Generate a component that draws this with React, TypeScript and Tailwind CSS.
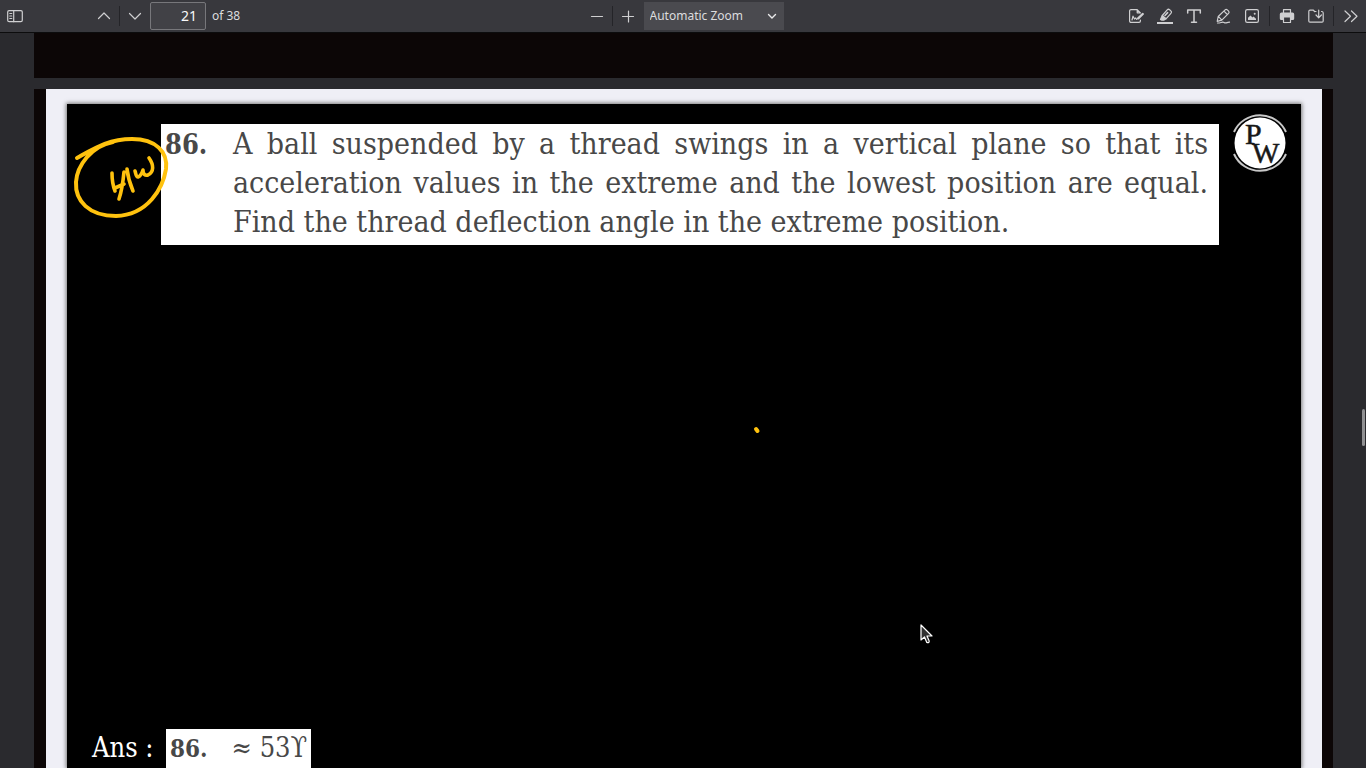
import type { ReactNode } from "react";

function ToolButton({ label, children }: { label: string; children: ReactNode }) {
  return (
    <button type="button" aria-label={label} className="flex h-7 w-7 shrink-0 items-center justify-center text-[#cfcfd1]">
      <svg width="16" height="16" viewBox="0 0 16 16" fill="none" stroke="currentColor" strokeWidth="1.2" strokeLinecap="round" strokeLinejoin="round" aria-hidden="true">
        {children}
      </svg>
    </button>
  );
}

function Separator() {
  return <span className="h-5 w-px shrink-0 bg-[#242428]" />;
}

function GroupSeparator() {
  return <span className="mx-0.5 h-5 w-px shrink-0 bg-[#242428]" />;
}

function Toolbar() {
  return (
    <header className="grid h-[33px] shrink-0 grid-cols-[1fr_auto_1fr] items-center border-b border-[#0c0c0d] bg-[#38383d] font-['Noto_Sans',sans-serif] text-xs text-[#dcdcde]">
      <div className="flex items-center pl-px">
        <ToolButton label="Toggle sidebar">
          <rect x=".7" y="2.7" width="14.6" height="11" rx="1.4" />
          <path d="M6.7 2.7v11M2.8 5.5h2M2.8 8h2M2.8 10.5h2" />
        </ToolButton>
        <div className="ml-[61px] flex items-center gap-px">
          <ToolButton label="Previous page">
            <path d="M2.5 10.5 8 5l5.5 5.5" />
          </ToolButton>
          <Separator />
          <ToolButton label="Next page">
            <path d="M2.5 5.5 8 11l5.5-5.5" />
          </ToolButton>
        </div>
        <input aria-label="Page" defaultValue="21" className="ml-px h-7 w-14 rounded-xs border border-[#77777b] bg-[#414146] pr-2 pb-0.5 text-right text-sm text-[#f9f9fa] outline-none" />
        <span className="ml-1.5">of 38</span>
      </div>
      <div className="flex items-center">
        <div className="flex items-center gap-px pr-0.5">
          <ToolButton label="Zoom out">
            <path d="M2.5 8.5h11" />
          </ToolButton>
          <Separator />
          <ToolButton label="Zoom in">
            <path d="M2.5 8.5h11M8.5 3v11" />
          </ToolButton>
        </div>
        <div className="grid items-center">
          <select aria-label="Zoom" className="col-start-1 row-start-1 h-7 w-[140px] appearance-none bg-[#4a4a4f] pl-1.5 outline-none">
            <option>Automatic Zoom</option>
          </select>
          <svg className="pointer-events-none col-start-1 row-start-1 mr-[7px] justify-self-end" width="10" height="10" viewBox="0 0 10 10" fill="none" stroke="#e9e9ea" strokeWidth="1.4" strokeLinecap="round" aria-hidden="true">
            <path d="m1.5 3.5 3.5 3.5 3.5-3.5" />
          </svg>
        </div>
      </div>
      <div className="flex items-center justify-end gap-px pr-px">
        <ToolButton label="Add signature">
          <path d="M12.4 12v1a1.4 1.4 0 0 1-1.4 1.4H3A1.4 1.4 0 0 1 1.6 13V3A1.4 1.4 0 0 1 3 1.6h6.2l3.2 3.2M9.2 1.8v3h3" />
          <path d="m4 12 1-3.800 1.500 2.800 1.200-1 1 1.400" />
          <path d="m10.200 10.300 4.500-4.300" strokeWidth="2.4" />
        </ToolButton>
        <ToolButton label="Highlight">
          <path d="m5.300 7.500 4.900-5.600a1.700 1.700 0 0 1 2.400-.1l1.200 1.100a1.700 1.700 0 0 1 .1 2.400L9 10.800z" />
          <path d="m8 7.500 2.600-2.900" strokeWidth="1.6" />
          <path d="m5 8-1.500 3.500 1 .6h2.200L8.700 11z" fill="currentColor" />
          <path d="M0 15h16" strokeWidth="2" strokeLinecap="butt" />
        </ToolButton>
        <ToolButton label="Add text">
          <path d="M1.7 5V2h12.600v3M8 2v12M5.500 14.200h5" strokeWidth="1.5" />
        </ToolButton>
        <ToolButton label="Draw">
          <path d="m3.200 8.500 6.900-6.600a1.600 1.600 0 0 1 2.200 0l1.300 1.300a1.600 1.600 0 0 1 0 2.200l-6.800 6.700-4.600 1.200zM9 3.200l3.300 3.300M3.500 8.600l3.200 3.200" />
          <path d="M2.500 15c2 .2 3.500-.6 5-.9s1.500.9 3 .8 2-.8 4-.7" />
        </ToolButton>
        <ToolButton label="Add image">
          <rect x="1.600" y="1.600" width="12.800" height="12.800" rx="1.600" />
          <path d="M4 12V9.800l2.500-2.300 2 2 1-1L12 10.700V12z" fill="currentColor" stroke="none" />
          <circle cx="10.700" cy="5.700" r="1" fill="currentColor" stroke="none" />
        </ToolButton>
        <GroupSeparator />
        <ToolButton label="Print">
          <path d="M4.500 5V1.700h7V5" />
          <path d="M2.500 4.500h11a1.700 1.700 0 0 1 1.700 1.700v4.300a1.500 1.500 0 0 1-1.500 1.500H12V9H4v3H2.300a1.500 1.500 0 0 1-1.500-1.500V6.200a1.700 1.700 0 0 1 1.700-1.700z" fill="currentColor" stroke="none" />
          <path d="M4.500 9h7v5.500h-7z" fill="#38383d" />
        </ToolButton>
        <ToolButton label="Save">
          <path d="M6.500 3.500 5.400 2.200H2A1.200 1.200 0 0 0 .8 3.400V13A1.200 1.200 0 0 0 2 14.200h12a1.200 1.200 0 0 0 1.200-1.200V5A1.500 1.500 0 0 0 14 3.500h-.5M6.500 3.500H8M10.700 2v7M8 7l2.700 2.800L13.400 7" />
        </ToolButton>
        <GroupSeparator />
        <ToolButton label="Tools">
          <path d="m2 3 5.500 5.200L2 13.500M8.500 3 14 8.200l-5.500 5.300" />
        </ToolButton>
      </div>
    </header>
  );
}

function Logo() {
  return (
    <svg className="-mt-3 h-[62px] w-[62px] shrink-0" viewBox="0 0 62 62" role="img" aria-label="PW">
      <circle cx="31" cy="31" r="25.500" fill="#fff" />
      <path d="M5 20a28.500 28.500 0 0 1 52 0M5 42a28.500 28.500 0 0 0 52 0" fill="none" stroke="#c8c8c8" strokeWidth="2" />
      <text x="16" y="32" fontFamily="Liberation Serif, serif" fontSize="30" fill="#181818" stroke="#181818" strokeWidth=".5">P</text>
      <text x="23" y="51" fontFamily="Liberation Serif, serif" fontSize="29" fill="#181818" stroke="#181818" strokeWidth=".5">W</text>
    </svg>
  );
}

function HomeworkMark() {
  return (
    <svg className="absolute top-8 left-1.5 h-[84px] w-[100px]" viewBox="0 0 100 84" fill="none" stroke="#ffc20e" strokeLinecap="round" strokeLinejoin="round" role="img" aria-label="H/W">
      <path d="M4 22C22 12 36 3 59 3c24 0 36 13 34 30-3 19-18 46-50 47C16 80 2 65 3 46 4 30 18 10 40 6" strokeWidth="4" />
      <path d="M39 37c0 8 1 13 3 18M51 36c-1 10-2 18-5 27M42 52l9-4M54 33c1 9 3 15 6 22M62 35c1 3 1 6 3 6 3-1 4-4 5-7 0 4 2 6 5 5 6-3 6-10 1-17" strokeWidth="3.600" />
    </svg>
  );
}

function Slide() {
  return (
    <article className="flex flex-1 bg-[#0c0606] px-3 pr-[11px]">
      <div className="flex flex-1 bg-[#efeff6] px-[21px] pt-[15px]">
        <div className="relative flex flex-1 flex-col bg-black shadow-[0_0_4px_1px_#777]">
          <div className="flex items-start pt-5">
            <section className="ml-[94px] grid flex-1 grid-cols-[72px_1fr] items-baseline bg-white pr-[11px] pb-1 font-['DejaVu_Serif_Condensed','DejaVu_Serif',serif] text-[30px] leading-[39px] text-[#484848]">
              <strong className="pl-1 text-[27px]">86.</strong>
              <p>
                <span className="block [text-align-last:justify]">A ball suspended by a thread swings in a vertical plane so that its</span>
                <span className="block [text-align-last:justify]">acceleration values in the extreme and the lowest position are equal.</span>
                <span className="block">Find the thread deflection angle in the extreme position.</span>
              </p>
            </section>
            <div className="flex w-[82px] justify-center"><Logo /></div>
          </div>
          <HomeworkMark />
          <svg className="absolute top-[322px] left-[55.6%] h-2 w-2" viewBox="0 0 8 8" aria-hidden="true">
            <path d="m3 3 1.500 2" stroke="#ffc20e" strokeWidth="4" strokeLinecap="round" />
          </svg>
          <svg className="absolute top-[520px] left-[69.1%] h-5 w-3.5" viewBox="0 0 14 20" aria-hidden="true">
            <path d="M1 1v15l3.500-3 2.300 5.500c1.500.6 2.800-.2 2.300-1.800L7 12h5z" fill="#303030" stroke="#fff" strokeWidth="1.200" strokeLinejoin="round" />
          </svg>
          <footer className="mt-auto flex items-baseline pl-[25px] font-['DejaVu_Serif_Condensed','DejaVu_Serif',serif] text-[27px] leading-[38px]">
            <span className="w-[74px] text-white">Ans :</span>
            <p className="flex items-baseline gap-6 bg-white px-1 text-[#484848]"><strong className="text-2xl leading-[38px]">86.</strong><span>≈ 53ϒ</span></p>
          </footer>
        </div>
      </div>
    </article>
  );
}

export default function App() {
  return (
    <div className="flex min-h-screen flex-col bg-[#2a2a2e]">
      <Toolbar />
      <main className="relative flex flex-1 flex-col pr-[33px] pl-[34px]">
        <div className="mb-[11px] h-[45px] bg-[#0c0606]" />
        <Slide />
        <div className="absolute top-[376px] right-px h-[37px] w-[3px] rounded-full bg-[#919193]" />
      </main>
    </div>
  );
}
